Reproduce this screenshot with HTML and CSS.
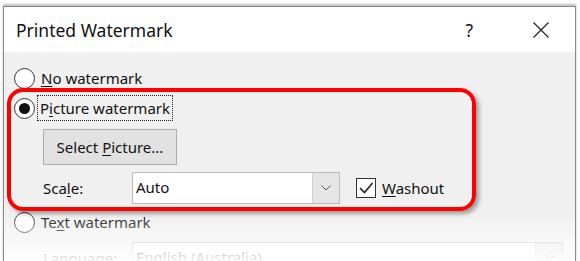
FILE: index.html
```html
<!DOCTYPE html>
<html lang="en">
<head>
  <meta charset="UTF-8">
  <meta name="viewport" content="width=device-width, initial-scale=1.0">
  <link rel="stylesheet" href="styles.css">
  <title>Printed Watermark</title>
</head>
<body>
  <div class="window">
    <div class="title-bar">
      <span class="title">Printed Watermark</span>
      <span class="help">?</span>
      <svg class="close" width="16" height="16" viewBox="0 0 16 16">
        <path d="M0.5 0.5 L15.5 15.5 M15.5 0.5 L0.5 15.5" stroke="#222" stroke-width="1.2" fill="none"/>
      </svg>
    </div>
    <div class="content">
      <div class="option">
        <span class="radio"></span>
        <span class="label"><u>N</u>o watermark</span>
      </div>
      <div class="option option-picture">
        <span class="radio checked"></span>
        <span class="label focus">P<u>i</u>cture watermark</span>
      </div>
      <div class="button"><span>Select <u>P</u>icture...</span></div>
      <div class="scale-row">
        <span class="field-label">Sca<u>l</u>e:</span>
        <div class="combo">
          <span class="combo-text">Auto</span>
          <span class="combo-btn">
            <svg width="10" height="6" viewBox="0 0 10 6"><path d="M0.5 0.5 L5 5 L9.5 0.5" stroke="#555" stroke-width="1" fill="none"/></svg>
          </span>
        </div>
        <span class="checkbox">
          <svg width="18" height="18" viewBox="0 0 18 18"><path d="M3 9 L7.5 13.5 L15.5 4" stroke="#222" stroke-width="1.6" fill="none"/></svg>
        </span>
        <span class="label"><u>W</u>ashout</span>
      </div>
      <div class="option option-text">
        <span class="radio"></span>
        <span class="label">Te<u>x</u>t watermark</span>
      </div>
      <div class="lang-row">
        <span class="field-label">Language:</span>
        <div class="combo combo-wide">
          <span class="combo-text">English (Australia)</span>
          <span class="combo-btn">
            <svg width="10" height="6" viewBox="0 0 10 6"><path d="M0.5 0.5 L5 5 L9.5 0.5" stroke="#555" stroke-width="1" fill="none"/></svg>
          </span>
        </div>
      </div>
    </div>
    <div class="highlight"></div>
    <div class="fade"></div>
  </div>
</body>
</html>
```

FILE: styles.css
```css
body {
  margin: 0;
  background-color: white;
  font-family: "Noto Sans", "Open Sans", sans-serif;
  color: #111;
  overflow: hidden;
}

.window {
  position: relative;
  margin: 6px 0 0 3px;
  width: 571px;
  height: 255px;
  overflow: hidden;
  border: 1px solid #8a8a8a;
  border-bottom: none;
  box-shadow: 0 -2px 2px rgba(0, 0, 0, 0.25);
  background-color: #f0f0f0;
}

.title-bar {
  display: flex;
  align-items: center;
  height: 45px;
  padding-left: 12px;
  background-color: white;
}

.title {
  font-size: 17.5px;
  flex-grow: 1;
}

.help {
  font-size: 17.5px;
  margin-right: 60px;
}

.close {
  margin-right: 26px;
}

.content {
  display: flex;
  flex-direction: column;
  padding-left: 10px;
  font-size: 15px;
}

.option {
  display: flex;
  align-items: center;
  height: 22px;
  margin-top: 15px;
}

.option-picture {
  margin-top: 8px;
}

.option-text {
  margin-top: 7px;
}

.radio {
  box-sizing: border-box;
  width: 21px;
  height: 21px;
  border: 1px solid #333;
  border-radius: 50%;
  background-color: white;
  display: flex;
  align-items: center;
  justify-content: center;
  margin-right: 6px;
}

.radio.checked::after {
  content: "";
  width: 11px;
  height: 11px;
  border-radius: 50%;
  background-color: #111;
}

.label {
  line-height: 22px;
}

.label.focus {
  outline: 1px dotted #222;
  outline-offset: 1px;
  padding: 0 1px;
  margin-left: -2px;
}

u {
  text-decoration-thickness: 1px;
  text-underline-offset: 2px;
}

.button {
  box-sizing: border-box;
  width: 134px;
  height: 36px;
  margin: 10px 0 0 29px;
  background-color: #e1e1e1;
  border: 1px solid #adadad;
  display: flex;
  align-items: center;
  justify-content: center;
}

.scale-row, .lang-row {
  display: flex;
  align-items: center;
  height: 32px;
  margin-top: 7px;
}

.lang-row {
  margin-top: 9px;
}

.field-label {
  width: 89px;
  padding-left: 29px;
}

.combo {
  box-sizing: border-box;
  display: flex;
  width: 208px;
  height: 32px;
  border: 1px solid #bcbcbc;
  background-color: white;
}

.combo-wide {
  width: 431px;
}

.combo-text {
  flex-grow: 1;
  padding-left: 3px;
  line-height: 28px;
}

.combo-btn {
  width: 26px;
  background-color: #e5e5e5;
  border-left: 1px solid #cfcfcf;
  display: flex;
  align-items: center;
  justify-content: center;
}

.checkbox {
  box-sizing: border-box;
  width: 20px;
  height: 20px;
  margin: 0 6px 0 16px;
  border: 1px solid #333;
  background-color: white;
  display: flex;
  align-items: center;
  justify-content: center;
}

.highlight {
  position: absolute;
  left: 3px;
  top: 81px;
  width: 461px;
  height: 115px;
  border: 4px solid #f00;
  border-radius: 16px;
  box-shadow: 3px 3px 4px rgba(0, 0, 0, 0.35);
}

.fade {
  position: absolute;
  left: 0;
  right: 0;
  top: 206px;
  bottom: 0;
  background: linear-gradient(to bottom, rgba(255, 255, 255, 0), rgba(255, 255, 255, 0.45) 22px, rgba(255, 255, 255, 0.95) 49px);
}
```
